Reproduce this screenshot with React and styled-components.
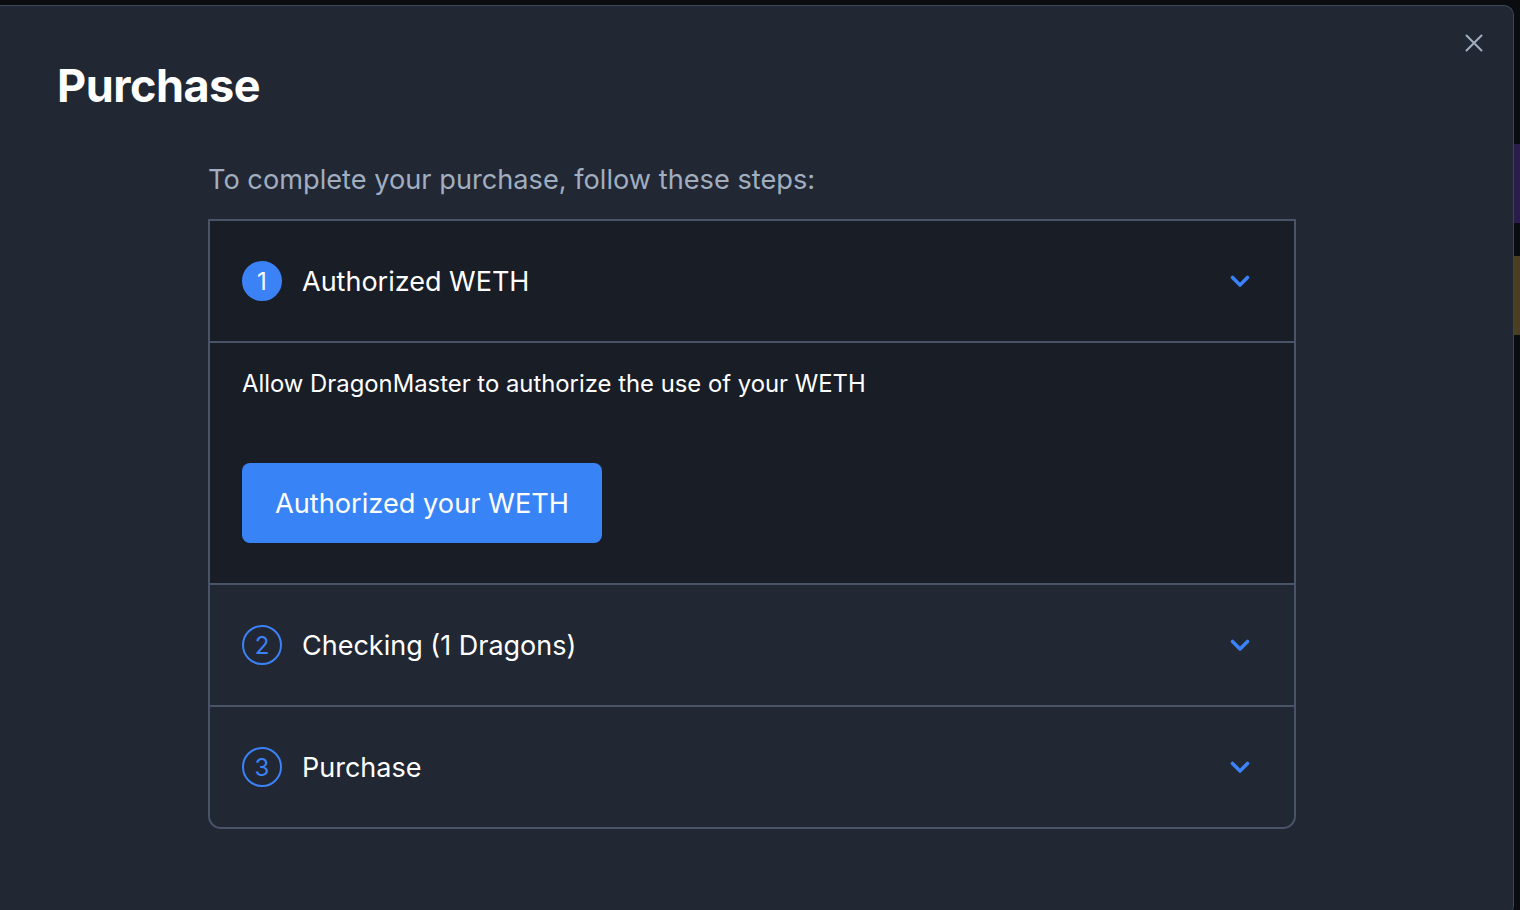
import React from 'react';
import styled, { createGlobalStyle } from 'styled-components';

const GlobalStyle = createGlobalStyle`
  html, body {
    margin: 0;
    padding: 0;
    background: #0a0c0f;
    font-family: Inter, "Noto Sans", "Liberation Sans", sans-serif;
    overflow: hidden;
  }
`;

const Backdrop = styled.div`
  display: flex;
  width: 1520px;
  height: 910px;
  padding-top: 5px;
  box-sizing: border-box;
`;

const Modal = styled.div`
  position: relative;
  flex: 0 0 1514px;
  height: 910px;
  box-sizing: border-box;
  background: #212733;
  border-top: 1px solid #3e4655;
  border-right: 1px solid #3e4655;
  border-radius: 0 10px 10px 0;
  padding: 0 0 0 57px;
`;

const SideStrip = styled.div`
  display: flex;
  flex-direction: column;
  flex: 1;
  padding-top: 139px;
`;

const StripBlock = styled.div`
  height: ${(p) => p.h}px;
  margin-bottom: ${(p) => p.gap || 0}px;
  background: ${(p) => p.color};
`;

const CloseButton = styled.button`
  position: absolute;
  top: 21px;
  right: 23px;
  width: 32px;
  height: 32px;
  padding: 0;
  border: none;
  background: transparent;
  display: flex;
  align-items: center;
  justify-content: center;
  cursor: pointer;
`;

const Title = styled.h1`
  margin: 0;
  padding-top: 52px;
  font-size: 45px;
  line-height: 56px;
  font-weight: 700;
  color: #ffffff;
  letter-spacing: -0.5px;
`;

const Body = styled.div`
  width: 1088px;
  margin-left: 151px;
  padding-top: 49px;
`;

const Intro = styled.p`
  margin: 0 0 22px;
  font-size: 27.2px;
  line-height: 34px;
  color: #a0aec0;
`;

const Accordion = styled.div`
  border: 2px solid #4a5468;
  border-radius: 0 0 13px 13px;
  overflow: hidden;
`;

const Item = styled.div`
  background: ${(p) => (p.open ? '#181d26' : 'transparent')};
  & + & {
    border-top: 2px solid #4a5468;
  }
`;

const Header = styled.div`
  display: flex;
  align-items: center;
  height: 120px;
  padding: 0 32px;
`;

const Badge = styled.span`
  flex: 0 0 auto;
  width: 40px;
  height: 40px;
  box-sizing: border-box;
  border-radius: 50%;
  display: flex;
  align-items: center;
  justify-content: center;
  font-size: 24px;
  color: ${(p) => (p.active ? '#ffffff' : '#3b82f6')};
  background: ${(p) => (p.active ? '#3b82f6' : 'transparent')};
  border: 2px solid #3b82f6;
`;

const HeaderLabel = styled.span`
  flex: 1;
  margin-left: 20px;
  font-size: 27px;
  color: #ffffff;
`;

const Chevron = styled.svg`
  margin-right: 10px;
`;

const Panel = styled.div`
  border-top: 2px solid #4a5468;
  padding: 26px 32px 40px;
`;

const PanelText = styled.p`
  margin: 0 0 64px;
  font-size: 23.85px;
  line-height: 30px;
  color: #ffffff;
`;

const PrimaryButton = styled.button`
  height: 80px;
  padding: 0 33px;
  border: none;
  border-radius: 8px;
  background: #3884f6;
  color: #ffffff;
  font-family: inherit;
  font-size: 27.2px;
  cursor: pointer;
`;

const steps = [
  { n: 1, label: 'Authorized WETH', open: true },
  { n: 2, label: 'Checking (1 Dragons)' },
  { n: 3, label: 'Purchase' },
];

const ChevronDown = () => (
  <Chevron width="24" height="24" viewBox="0 0 24 24">
    <path d="M4.5 8.5l7.5 7.5 7.5-7.5" fill="none" stroke="#3b82f6" strokeWidth="3.6" strokeLinecap="round" strokeLinejoin="round" />
  </Chevron>
);

const App = () => {
  return (
    <>
      <GlobalStyle />
      <Backdrop>
        <Modal>
          <CloseButton aria-label="Close">
            <svg width="18" height="18" viewBox="0 0 18 18">
              <path d="M1.5 1.5l15 15M16.5 1.5l-15 15" stroke="#a0aec0" strokeWidth="2" strokeLinecap="round" />
            </svg>
          </CloseButton>
          <Title>Purchase</Title>
          <Body>
            <Intro>To complete your purchase, follow these steps:</Intro>
            <Accordion>
              {steps.map((step) => (
                <Item key={step.n} open={step.open}>
                  <Header>
                    <Badge active={step.open}>{step.n}</Badge>
                    <HeaderLabel>{step.label}</HeaderLabel>
                    <ChevronDown />
                  </Header>
                  {step.open && (
                    <Panel>
                      <PanelText>Allow DragonMaster to authorize the use of your WETH</PanelText>
                      <PrimaryButton>Authorized your WETH</PrimaryButton>
                    </Panel>
                  )}
                </Item>
              ))}
            </Accordion>
          </Body>
        </Modal>
        <SideStrip>
          <StripBlock h={79} gap={33} color="#2a1d4b" />
          <StripBlock h={79} color="#4a3f20" />
        </SideStrip>
      </Backdrop>
    </>
  );
};

export default App;
